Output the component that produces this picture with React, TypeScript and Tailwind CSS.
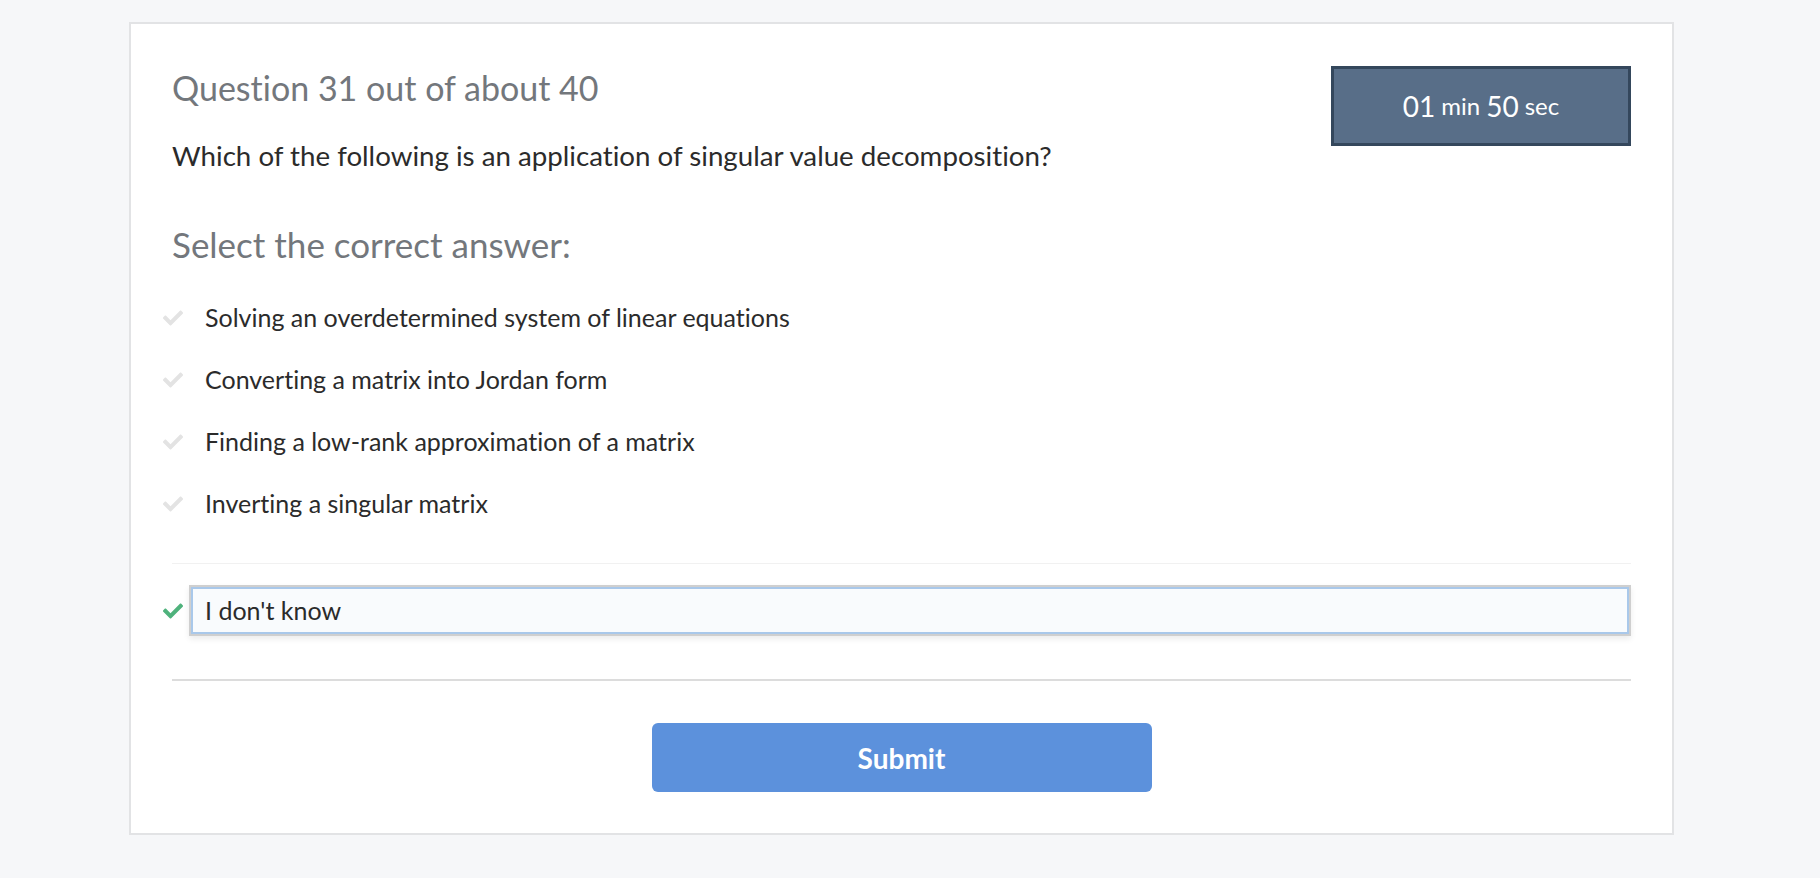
import React from "react";

const Check = ({ className }: { className: string }) => (
  <svg viewBox="0 0 512 512" className={className} fill="currentColor">
    <path d="M173.9 439.4l-166.4-166.4c-10-10-10-26.2 0-36.2l36.2-36.2c10-10 26.2-10 36.2 0L192 312.7 432.1 72.6c10-10 26.2-10 36.2 0l36.2 36.2c10 10 10 26.2 0 36.2l-294.4 294.4c-10 10-26.2 10-36.2 0z" />
  </svg>
);

const options = [
  "Solving an overdetermined system of linear equations",
  "Converting a matrix into Jordan form",
  "Finding a low-rank approximation of a matrix",
  "Inverting a singular matrix",
];

export default function App() {
  return (
    <div
      className="min-h-screen w-full bg-[#f6f7f9] pt-[22px] pb-[40px] [font-variant-ligatures:none]"
      style={{ fontFamily: "Lato, 'Open Sans', sans-serif" }}
    >
      <div className="ml-[129px] w-[1545px] border-2 border-[#e2e3e5] bg-white px-[41px] pt-[44px] pb-[41px]">
        <div className="flex items-start justify-between">
          <div className="flex flex-col">
            <div className="h-[40px] text-[34px] leading-[40px] text-[#73777c]">
              Question 31 out of about 40
            </div>
            <div className="mt-[32px] h-[32px] text-[27.7px] leading-[32px] text-[#2b2b2b]">
              Which of the following is an application of singular value decomposition?
            </div>
          </div>
          <div className="mt-[-2px] flex h-[80px] w-[300px] items-center justify-center border-[3px] border-[#34475c] bg-[#586e88] text-[27px] text-white">
            <span className="text-[28px]">01</span>
            <span className="ml-[6px] text-[24px]">min</span>
            <span className="ml-[6px] text-[28px]">50</span>
            <span className="ml-[6px] text-[24px]">sec</span>
          </div>
        </div>

        <div className="mt-[52px] h-[40px] text-[35px] leading-[40px] text-[#73777c]">
          Select the correct answer:
        </div>

        <div className="mt-[23px] flex flex-col">
          {options.map((o) => (
            <div key={o} className="-ml-[9px] flex h-[62px] items-center">
              <Check className="h-[20px] w-[20px] text-[#e3e3e3]" />
              <span className="ml-[22px] text-[25px] text-[#2b2b2b]">{o}</span>
            </div>
          ))}
        </div>

        <div className="mt-[28px] h-px bg-[#f1f1f1]" />

        <div className="mt-[21px] -ml-[9px] flex items-center">
          <Check className="h-[20px] w-[20px] text-[#4fb27c]" />
          <div className="ml-[6px] flex-1 border-2 border-[#cfcfcf] shadow-[0_3px_6px_rgba(0,0,0,0.08)]">
            <div className="flex h-[47px] items-center border-2 border-[#a9c8ea] bg-[#f9fbfd] pl-[12px] text-[25px] text-[#2b2b2b]">
              I don't know
            </div>
          </div>
        </div>

        <div className="mt-[43px] h-[2px] bg-[#dcdcdc]" />

        <div className="mt-[42px] flex justify-center">
          <button className="h-[69px] w-[500px] rounded-[6px] bg-[#5c91dc] text-[28px] font-bold text-white">
            Submit
          </button>
        </div>
      </div>
    </div>
  );
}
